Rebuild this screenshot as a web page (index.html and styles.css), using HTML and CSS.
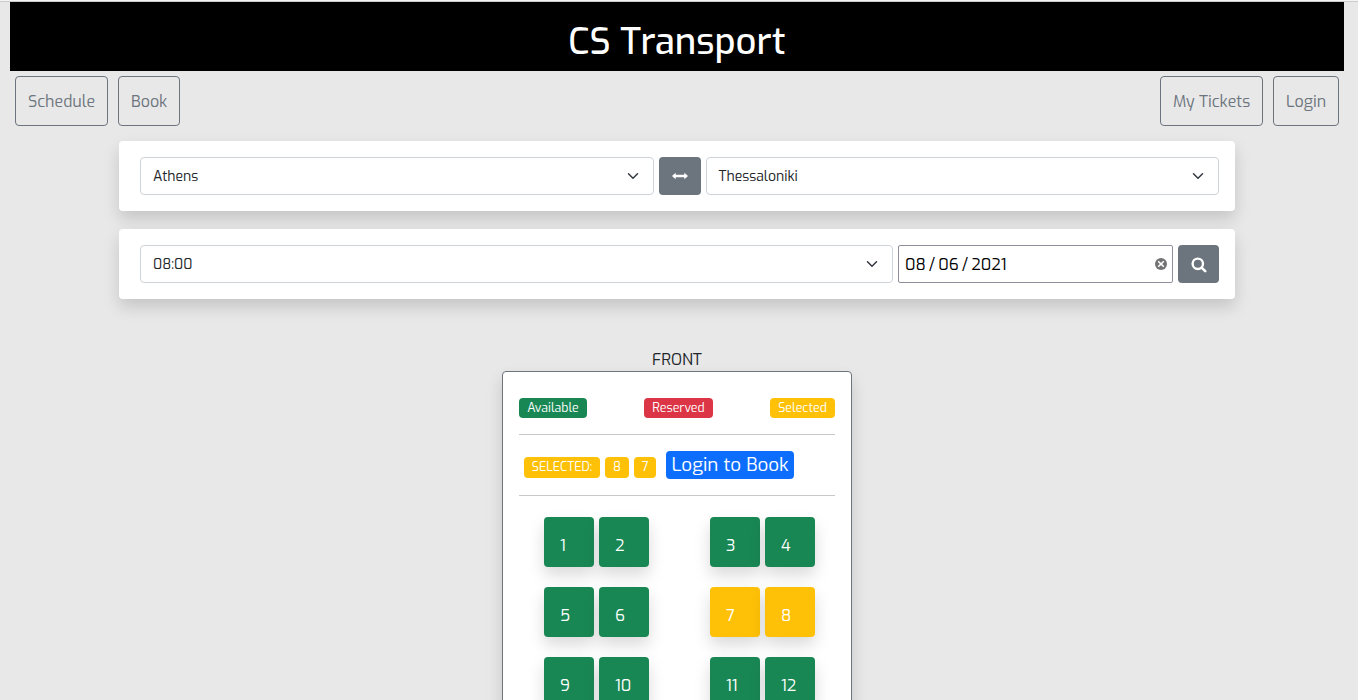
FILE: index.html
```html
<!DOCTYPE html>
<html lang="en">
<head>
<meta charset="utf-8">
<title>CS Transport</title>
<link rel="stylesheet" href="styles.css">
</head>
<body>
<div class="page">
  <header class="banner"><h1 class="brand">CS Transport</h1></header>
  <nav class="nav">
    <a class="nav-btn schedule">Schedule</a>
    <a class="nav-btn book">Book</a>
    <span class="spacer"></span>
    <a class="nav-btn tickets">My Tickets</a>
    <a class="nav-btn login">Login</a>
  </nav>
  <section class="card">
    <div class="select"><span class="value">Athens</span><svg class="chevron" viewBox="0 0 16 16"><path d="M2 5l6 6 6-6"/></svg></div>
    <button class="icon-btn swap" aria-label="Swap"><svg width="16" height="8" viewBox="0 0 16 8"><path fill="#fff" d="M0 4 3.7.8V2.8h8.6V.8L16 4l-3.7 3.2V5.2H3.7v2z"/></svg></button>
    <div class="select"><span class="value">Thessaloniki</span><svg class="chevron" viewBox="0 0 16 16"><path d="M2 5l6 6 6-6"/></svg></div>
  </section>
  <section class="card second">
    <div class="select"><span class="value">08:00</span><svg class="chevron" viewBox="0 0 16 16"><path d="M2 5l6 6 6-6"/></svg></div>
    <div class="date"><span class="date-text">08 / 06 / 2021</span><svg width="12" height="12" viewBox="0 0 12 12"><circle cx="6" cy="6" r="6" fill="#737373"/><path d="M3.7 3.7l4.6 4.6M8.3 3.7L3.7 8.3" stroke="#fff" stroke-width="1.6" stroke-linecap="round"/></svg></div>
    <button class="icon-btn search" aria-label="Search"><svg width="16" height="16" viewBox="0 0 16 16"><circle cx="6.8" cy="6.8" r="5.2" fill="none" stroke="#fff" stroke-width="2.4"/><path d="M10.6 10.6l3.6 3.6" stroke="#fff" stroke-width="2.6" stroke-linecap="round"/></svg></button>
  </section>
  <main class="bus">
    <div class="front"><span>FRONT</span></div>
    <div class="panel">
      <div class="legend">
        <span class="badge green available">Available</span>
        <span class="badge red reserved">Reserved</span>
        <span class="badge yellow selected">Selected</span>
      </div>
      <div class="choice">
        <span class="badge yellow label">SELECTED:</span>
        <span class="badge yellow eight">8</span>
        <span class="badge yellow seven">7</span>
        <a class="login-book">Login to Book</a>
      </div>
      <div class="seats">
        <div class="row"><span class="seat green">1</span><span class="seat green">2</span><span class="seat green aisle">3</span><span class="seat green">4</span></div>
        <div class="row"><span class="seat green">5</span><span class="seat green">6</span><span class="seat yellow aisle">7</span><span class="seat yellow">8</span></div>
        <div class="row"><span class="seat green">9</span><span class="seat green">10</span><span class="seat green aisle">11</span><span class="seat green">12</span></div>
      </div>
    </div>
  </main>
</div>
</body>
</html>
```
FILE: styles.css
```css
* { box-sizing: border-box; }
body { margin: 0; background: #e8e8e8; color: #212529; font: 400 16px/24px Exo, "Exo 2", Roboto, sans-serif; }
.page { height: 700px; overflow: hidden; border-top: 1px solid #f4f4f4; padding: 0 14px 0 10px; background: linear-gradient(#c9cccc, #c9cccc) 0 0 / 100% 1px no-repeat; }
.banner { height: 69px; margin-top: 1px; background: #000; color: #fff; display: flex; justify-content: center; padding-top: 16px; }
.brand { margin: 0; font-size: 36.4px; font-weight: 460; line-height: 48px; }
.nav { display: flex; gap: 10px; padding: 5px 5px 0; height: 55px; }
.spacer { flex: 1; }
.nav-btn { height: 50px; border: 1px solid #6c757d; border-radius: 4px; color: #6c757d; line-height: 50px; padding-left: 12px; white-space: nowrap; }
.schedule { width: 93px; }
.book { width: 62px; }
.tickets { width: 103px; }
.login { width: 66px; }
.card { width: 1116px; height: 70px; margin: 15px 0 0 109px; padding: 16px 16px 16px 21px; display: flex; gap: 5px; background: #fff; border-radius: 4px; box-shadow: 0 8px 16px rgba(0,0,0,.15); }
.second { margin-top: 18px; }
.select { flex: 1; height: 38px; border: 1px solid #ced4da; border-radius: 4px; padding: 0 12px; display: flex; justify-content: space-between; align-items: center; font-size: 14px; }
.value { padding-top: 2px; }
.chevron { width: 16px; height: 12px; flex: none; fill: none; stroke: #343a40; stroke-width: 2; stroke-linecap: round; stroke-linejoin: round; }
.icon-btn { height: 38px; padding: 0; border: 0; border-radius: 4px; background: #6c757d; display: flex; align-items: center; justify-content: center; }
.swap { width: 42px; }
.search { width: 41px; padding: 1px 0 0; }
.date { width: 275px; height: 38px; border: 1px solid #8f8f9d; border-radius: 2px; padding: 0 5px 0 6px; display: flex; justify-content: space-between; align-items: center; color: #000; }
.date-text { padding-top: 2px; word-spacing: -1.25px; }
.bus { width: 350px; margin: 48px 0 0 492px; }
.front { height: 24px; line-height: 26px; text-align: center; }
.panel { height: 480px; border: 1px solid #6c757d; border-radius: 4px; background: #fff; padding: 26px 16px; box-shadow: 0 8px 16px rgba(0,0,0,.15); }
.legend { display: flex; justify-content: space-between; height: 37px; border-bottom: 1px solid #c8c8c8; }
.badge { height: 20px; border-radius: 4px; color: #fff; font-size: 12.4px; font-weight: 430; line-height: 20px; text-align: center; white-space: nowrap; }
.green { background: #198754; }
.red { background: #dc3545; }
.yellow { background: #ffc107; }
.available { width: 68px; }
.reserved { width: 69px; }
.selected { width: 65px; }
.choice { height: 61px; border-bottom: 1px solid #c8c8c8; padding: 16px 0 0 5px; display: flex; }
.choice .badge { margin: 6px 5px 0 0; height: 21px; }
.label { width: 76px; }
.eight { width: 24px; }
.seven { width: 22px; }
.login-book { width: 128px; height: 28px; margin-left: 5px; background: #0d6efd; color: #fff; border-radius: 4px; font-size: 18.75px; font-weight: 430; line-height: 27px; text-align: center; white-space: nowrap; }
.seats { padding: 21px 0 0 25px; display: grid; row-gap: 20px; }
.row { display: flex; gap: 5px; }
.seat { width: 50px; height: 50px; padding: 17px 0 0 16px; border-radius: 4px; color: #fff; box-shadow: 0 8px 16px rgba(0,0,0,.15); }
.aisle { margin-left: 56px; }
```
